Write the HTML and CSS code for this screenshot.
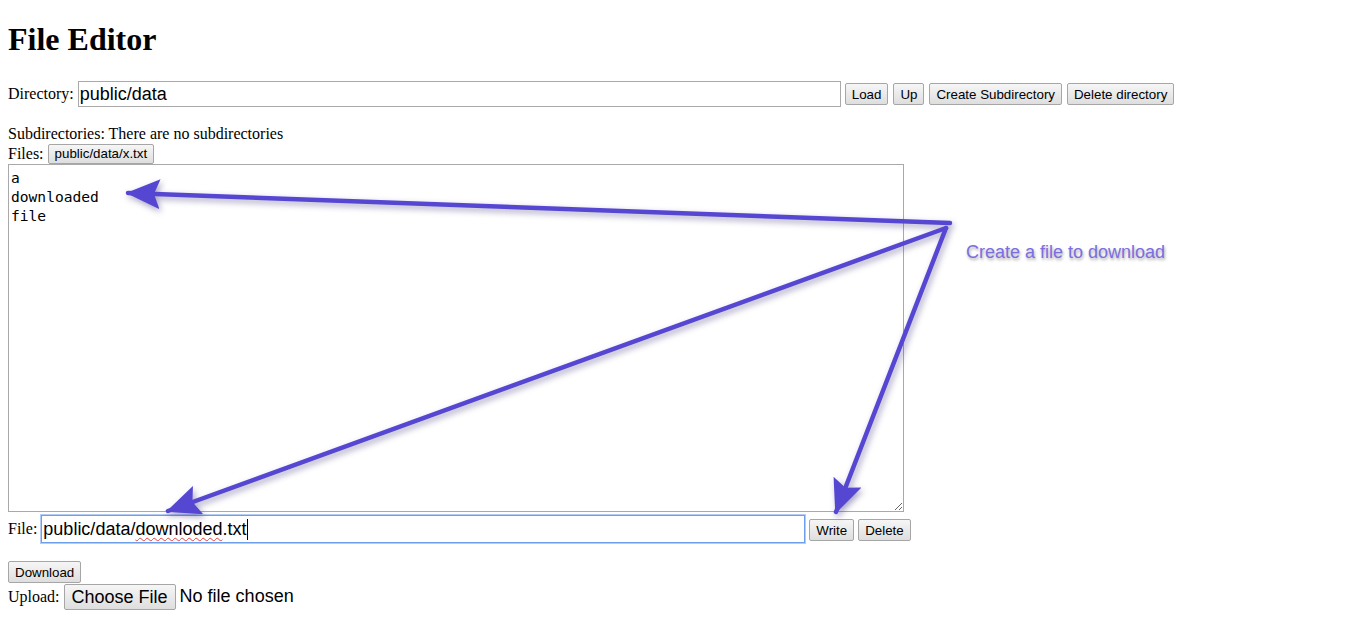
FILE: index.html
```html
<!DOCTYPE html>
<html lang="en">
<head>
    <meta charset="UTF-8">
    <title>File Editor</title>
    <link rel="stylesheet" href="styles.css">
</head>
<body>
    <div class="page">
        <h1 class="title">File Editor</h1>

        <div class="row dir-row">
            <label class="label">Directory:</label>
            <input class="text-input dir-input" type="text" value="public/data">
            <button class="btn">Load</button>
            <button class="btn">Up</button>
            <button class="btn">Create Subdirectory</button>
            <button class="btn">Delete directory</button>
        </div>

        <div class="subdirs">Subdirectories: There are no subdirectories</div>
        <div class="row files-row">
            <span class="label">Files:</span>
            <button class="btn">public/data/x.txt</button>
        </div>

        <textarea class="editor">a
downloaded
file</textarea>

        <div class="row file-row">
            <label class="label">File:</label>
            <div class="text-input file-input">public/data/<span class="misspelled">downloded</span>.txt<span class="caret"></span></div>
            <button class="btn">Write</button>
            <button class="btn">Delete</button>
        </div>

        <div class="row download-row">
            <button class="btn">Download</button>
        </div>
        <div class="row upload-row">
            <span class="label">Upload:</span>
            <span class="choose-btn">Choose File</span>
            <span class="no-file">No file chosen</span>
        </div>
    </div>

    <!-- annotation overlay -->
    <svg class="arrows" width="1366" height="638" viewBox="0 0 1366 638">
        <defs>
            <marker id="head" markerUnits="userSpaceOnUse" markerWidth="34" markerHeight="30" refX="32" refY="15" orient="auto">
                <path d="M0,0 L34,15 L0,30 L6,15 z" fill="#5647d3"/>
            </marker>
        </defs>
        <g stroke="#5647d3" stroke-width="4.5" stroke-linecap="round" fill="none">
            <line x1="950" y1="223" x2="128" y2="193" marker-end="url(#head)"/>
            <line x1="946" y1="228" x2="168" y2="511" marker-end="url(#head)"/>
            <line x1="946" y1="228" x2="836" y2="512" marker-end="url(#head)"/>
        </g>
    </svg>
    <div class="note">Create a file to download</div>
</body>
</html>
```

FILE: styles.css
```css
body {
    margin: 8px;
    font-family: "Liberation Serif", "Times New Roman", serif;
    font-size: 16px;
    color: #000;
    background: #fff;
}

.title {
    font-size: 32px;
    font-weight: bold;
    margin: 13px 0 22px;
    line-height: 37px;
}

.row {
    display: flex;
    align-items: center;
}

.label {
    margin-right: 4px;
}

.text-input {
    font-family: "Liberation Sans", Arial, sans-serif;
    font-size: 18px;
    border: 1px solid #a9a9a9;
    padding: 1px 1px;
    margin: 0 4px 0 0;
    height: 26px;
    box-sizing: border-box;
    outline: none;
}

.dir-input {
    width: 763px;
}

.dir-row {
    height: 28px;
}

.btn {
    font-family: "Liberation Sans", Arial, sans-serif;
    font-size: 13.33px;
    color: #000;
    height: 22px;
    padding: 0 6px;
    margin-right: 5px;
    border: 1px solid #a6a6a6;
    border-radius: 2px;
    background: linear-gradient(#f6f6f6, #dedede);
}

.subdirs {
    margin-top: 17px;
    line-height: 18px;
}

.files-row {
    height: 21px;
}

.files-row .btn {
    height: 20px;
}

.editor {
    display: block;
    width: 896px;
    height: 348px;
    box-sizing: border-box;
    margin: 0;
    border: 1px solid #a9a9a9;
    padding: 3px 2px 2px;
    font-family: "DejaVu Sans Mono", monospace;
    font-size: 14.6px;
    line-height: 19px;
    color: #000;
    resize: both;
}

.file-row {
    margin-top: 3px;
    height: 28px;
}

.file-input {
    display: flex;
    align-items: center;
    width: 764px;
    height: 28px;
    padding: 0 1px;
    border: 1px solid #6d9eeb;
    box-shadow: 0 0 0 1px #b4cdf5;
}

.misspelled {
    text-decoration: underline wavy #e34040;
    text-decoration-thickness: 1px;
    text-underline-offset: 2px;
}

.caret {
    display: inline-block;
    width: 1px;
    height: 21px;
    background: #000;
}

.file-row .btn {
    margin-top: 2px;
    margin-right: 4px;
}

.download-row {
    margin-top: 18px;
}

.download-row .btn {
    margin-right: 0;
}

.upload-row {
    height: 27px;
}

.choose-btn {
    font-family: "Liberation Sans", Arial, sans-serif;
    font-size: 18px;
    height: 26px;
    line-height: 24px;
    padding: 0 7px;
    box-sizing: border-box;
    border: 1px solid #a6a6a6;
    border-radius: 2px;
    background: linear-gradient(#f6f6f6, #dedede);
    margin-right: 4px;
}

.no-file {
    font-family: "Liberation Sans", Arial, sans-serif;
    font-size: 18px;
}

.arrows {
    position: absolute;
    left: 0;
    top: 0;
    pointer-events: none;
    filter: drop-shadow(2px 3px 3px rgba(60, 50, 120, 0.45));
}

.note {
    position: absolute;
    left: 966px;
    top: 242px;
    font-family: "Liberation Sans", Arial, sans-serif;
    font-size: 18px;
    color: #7a6ee2;
    text-shadow: 1px 2px 3px rgba(0, 0, 0, 0.35);
}
```
